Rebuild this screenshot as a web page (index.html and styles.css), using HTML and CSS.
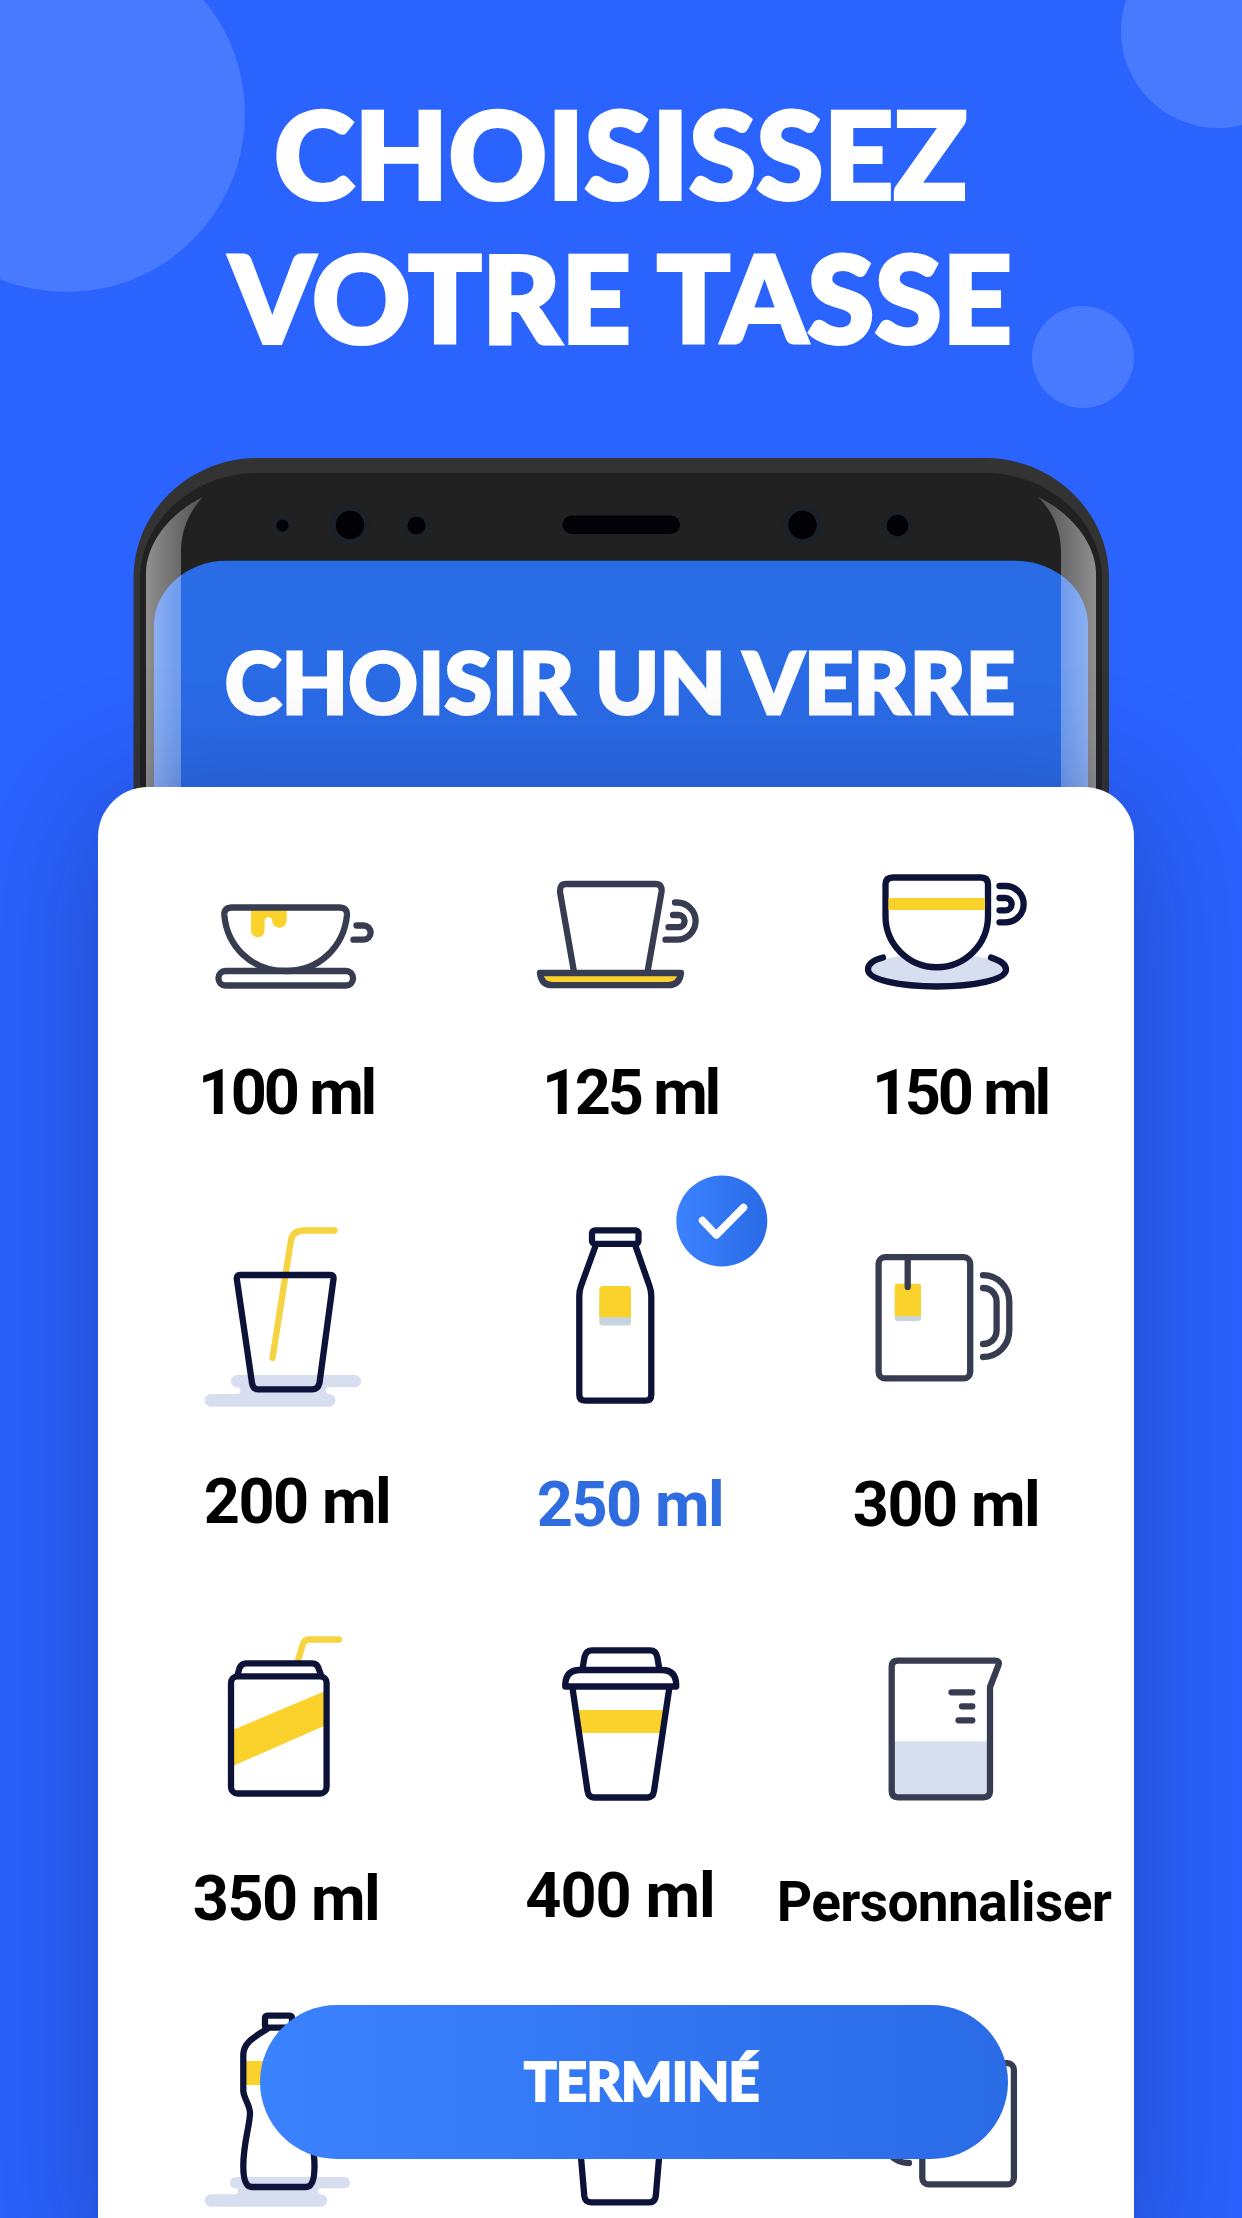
FILE: index.html
```html
<!DOCTYPE html>
<html lang="fr">
<head>
    <meta charset="UTF-8">
    <meta name="viewport" content="width=device-width, initial-scale=1.0">
    <title>Choisissez votre tasse</title>
    <link rel="stylesheet" href="styles.css">
</head>
<body>
    <div class="poster">
        <span class="bubble bubble-left"></span>
        <span class="bubble bubble-top"></span>
        <span class="bubble bubble-small"></span>

        <header>
            <h1>CHOISISSEZ<br>VOTRE TASSE</h1>
        </header>

        <!-- Phone -->
        <section class="phone">
            <svg class="phone-frame" viewBox="133 458 977 360">
                <defs>
                    <linearGradient id="glareLeft">
                        <stop offset="0" stop-color="#fff" stop-opacity="0.5"/>
                        <stop offset="0.4" stop-color="#fff" stop-opacity="0.38"/>
                        <stop offset="1" stop-color="#fff" stop-opacity="0.22"/>
                    </linearGradient>
                    <linearGradient id="glareRight">
                        <stop offset="0" stop-color="#fff" stop-opacity="0.22"/>
                        <stop offset="0.6" stop-color="#fff" stop-opacity="0.38"/>
                        <stop offset="1" stop-color="#fff" stop-opacity="0.5"/>
                    </linearGradient>
                </defs>
                <path fill="#333" d="M133.5 818V578C133.5 511 190 458 257 458H986C1052 458 1109 511 1109 578V818Z"/>
                <path fill="#212121" d="M140 818V578C141 518 196 473 257 473H986C1046 473 1101 518 1102 578V818Z"/>
                <g fill="#1a2129">
                    <circle cx="282.5" cy="525.5" r="9"/>
                    <circle cx="350" cy="525" r="20"/>
                    <circle cx="416.5" cy="525.5" r="12"/>
                    <circle cx="802.5" cy="525" r="20"/>
                    <circle cx="897.5" cy="525.5" r="14"/>
                </g>
                <g fill="#020207">
                    <circle cx="282.5" cy="525.5" r="6"/>
                    <circle cx="350" cy="525" r="14.2"/>
                    <circle cx="416.5" cy="525.5" r="9"/>
                    <rect x="562.5" y="515.5" width="117.5" height="18.5" rx="9.25"/>
                    <circle cx="802.5" cy="525" r="14.2"/>
                    <circle cx="897.5" cy="525.5" r="10.7"/>
                </g>
                <path fill="#2a6be6" d="M154 818V625C154 589 188 560.7 226 560.7H1015C1055 560.7 1088 589 1088 625V818Z"/>
                <path fill="url(#glareLeft)" d="M146 818V572C147 541 172 512 203 497C189 512 181 530 181 552V818Z"/>
                <path fill="url(#glareRight)" d="M1096 818V572C1095 541 1069 512 1038 497C1053 512 1061 530 1061 552V818Z"/>
            </svg>
            <h2>CHOISIR UN VERRE</h2>
        </section>

        <!-- Cup list -->
        <main class="card">
            <div class="row row-1">
                <div class="cup">
                    <svg viewBox="98 827 376 230">
                        <path class="yellow" d="M251 909V930.5a6.800 6.800 0 0 0 13.600 0V921a3.800 3.800 0 0 1 7.600 0a7 7 0 0 0 14.500 -1V909Z"/>
                        <path class="slate" d="M232 907.5H339Q347.500 907.5 347 915C344 946 320 971 286 971C251 971 227 946 224.300 915Q224 907.5 232 907.5Z"/>
                        <rect class="slate" x="218.5" y="971" width="134.5" height="14.5" rx="7"/>
                        <path class="slate" d="M356.5 925.5H363.500a7 7 0 0 1 0 14.200H353.500"/>
                    </svg>
                    <p>100 ml</p>
                </div>
                <div class="cup">
                    <svg viewBox="474 827 312 230">
                        <path class="slate" d="M574 972L560 892Q559.500 884 566 884H655.500Q662.500 884 661.500 892L647.500 972"/>
                        <path class="slate yellow" d="M540 973H681Q679.500 985.200 668 985.200H552Q541.500 985.200 540 973Z"/>
                        <path class="slate" d="M675 902.500H677A18.600 18.600 0 0 1 677 939.700H665.500M673 915H678.500a6.100 6.100 0 0 1 0 12.200H668.500"/>
                    </svg>
                    <p>125 ml</p>
                </div>
                <div class="cup">
                    <svg viewBox="786 827 348 230">
                        <ellipse class="light" cx="937" cy="970" rx="69" ry="16.5"/>
                        <path class="white navy" d="M893 877.500H981Q988 877.500 988 884.500V916A51.200 51.200 0 0 1 885.500 916V884.500Q885.500 877.500 893 877.500Z"/>
                        <path class="yellow" d="M888.500 898H985V910H888.500Z"/>
                        <path class="navy" d="M883 957.500C873 960 868 964 868 969.500C868 980 900 986.500 937 986.500C974 986.500 1006 980 1006 969.500C1006 964 1001 961 991 957.500"/>
                        <path class="navy" d="M999.500 886H1005.500a18.150 18.150 0 0 1 0 36.300H999.500M999.500 898H1005.500a6.150 6.150 0 0 1 0 12.300H999.500"/>
                    </svg>
                    <p>150 ml</p>
                </div>
            </div>

            <div class="row row-2">
                <div class="cup">
                    <svg viewBox="98 1129 376 340">
                        <path class="light" d="M237 1375H355a6 6 0 0 1 0 12.200H329a3.400 3.400 0 0 0 0 6.800a6.300 6.300 0 0 1 0 12.700H211a6.300 6.300 0 0 1 0 -12.700H237a3.400 3.400 0 0 0 0 -6.800a6 6 0 0 1 0 -12.200Z"/>
                        <path class="straw" d="M334.500 1230.500H304Q293 1230.500 291 1240L272.500 1358"/>
                        <path class="navy" d="M240 1275H330.500Q334 1275 333.500 1279L319.500 1383Q318 1389.300 312 1389.300H258Q253 1389.300 252 1383L236.800 1279Q236.500 1275 240 1275Z"/>
                    </svg>
                    <p class="label-200">200 ml</p>
                </div>
                <div class="cup selected">
                    <svg viewBox="474 1129 312 340">
                        <defs>
                            <linearGradient id="badge">
                                <stop offset="0" stop-color="#3b82ff"/>
                                <stop offset="1" stop-color="#2a6be6"/>
                            </linearGradient>
                        </defs>
                        <rect class="tag-shadow" x="599.3" y="1300" width="31.7" height="25.6" rx="3.5"/>
                        <path class="yellow" d="M603 1286H627.500Q631 1286 631 1289.500V1317.300H599.300V1289.500Q599.300 1286 603 1286Z"/>
                        <rect class="navy" x="592" y="1230.3" width="46.5" height="13.6" rx="3"/>
                        <path class="navy" d="M595.500 1246L581 1286Q579.300 1291 579.300 1296V1395Q579.300 1400.700 586 1400.700H645Q651.300 1400.700 651.300 1395V1296Q651.300 1291 649.500 1286L635.500 1246"/>
                        <circle cx="721.8" cy="1221" r="45.5" fill="url(#badge)"/>
                        <path class="check" d="M702.500 1220.500L716.300 1235L743.500 1207.500"/>
                    </svg>
                    <p>250 ml</p>
                </div>
                <div class="cup">
                    <svg viewBox="786 1129 348 340">
                        <rect class="tag-shadow" x="894.7" y="1300" width="26.3" height="21" rx="3"/>
                        <rect class="yellow" x="894.7" y="1283.7" width="26.3" height="32.5" rx="2"/>
                        <rect class="slate" x="878.6" y="1257.2" width="91.6" height="121.2" rx="6.5"/>
                        <path class="slate" d="M907.700 1258V1287"/>
                        <path class="slate" d="M983 1275.200C998 1275.200 1009.300 1287 1009.300 1302V1330C1009.300 1345 998 1357 983 1357M983 1288C991 1288 996.600 1294 996.600 1302V1330C996.600 1338 991 1344 983 1344"/>
                    </svg>
                    <p class="label-300">300 ml</p>
                </div>
            </div>

            <div class="row row-3">
                <div class="cup">
                    <svg viewBox="98 1541 376 322">
                        <path class="yellow" d="M234 1729.500L324 1691.500V1726L234 1765.500Z"/>
                        <path class="straw" d="M297.500 1662L303 1644Q304.500 1639.500 309 1639.500H339"/>
                        <rect class="navy" x="231" y="1676.3" width="95.6" height="117.2" rx="6.5"/>
                        <path class="navy" d="M237.500 1675L239.500 1668Q241.500 1663.300 246 1663.300H312.500Q317 1663.300 318.500 1668L321 1675"/>
                    </svg>
                    <p>350 ml</p>
                </div>
                <div class="cup">
                    <svg viewBox="474 1541 312 322">
                        <path class="yellow" d="M577 1710H665L661 1733H580Z"/>
                        <path class="navy" d="M582.500 1669L584.500 1657Q586 1650.300 592 1650.300H650Q656 1650.300 657.300 1657L659.300 1669"/>
                        <path class="navy" d="M565.300 1686.500V1684Q566 1670 580 1670H662Q675.500 1670 676.200 1684V1686.500Z"/>
                        <path class="navy" d="M572.500 1688L587.500 1791Q588.500 1797.500 594 1797.500H647.500Q653 1797.500 654 1791L669.300 1688"/>
                    </svg>
                    <p class="label-400">400 ml</p>
                </div>
                <div class="cup">
                    <svg viewBox="786 1541 348 322">
                        <path class="light" d="M893 1741.300H989V1796H893Z"/>
                        <path class="slate" d="M898 1660.700H995Q1000 1660.700 998.500 1665L990 1687V1791Q990 1797.300 983.500 1797.300H898Q891.700 1797.300 891.700 1791V1667Q891.700 1660.700 898 1660.700Z"/>
                        <path class="slate" d="M951.500 1692.300H972.300M962 1706.300H972.300M958.500 1720.300H972.300"/>
                    </svg>
                    <p class="label-custom">Personnaliser</p>
                </div>
            </div>

            <div class="row row-4">
                <div class="cup">
                    <svg viewBox="98 1935 376 283">
                        <path class="light" d="M235 2177H345a5.700 5.700 0 0 1 0 11.300H321a3 3 0 0 0 0 6a6.200 6.200 0 0 1 0 12.400H211a6.200 6.200 0 0 1 0 -12.400H235a3 3 0 0 0 0 -6a5.700 5.700 0 0 1 0 -11.300Z"/>
                        <path class="yellow" d="M246 2061H312V2085H246Z"/>
                        <rect class="navy" x="265" y="2015.7" width="27" height="12" rx="2"/>
                        <path class="navy" d="M267 2029C256 2036 243.300 2042 243.300 2055V2091C244 2099 250 2105 250 2113C250 2125 243.300 2143 243.300 2166Q243.300 2187 252 2187H306Q314.500 2187 314.500 2166C314.500 2143 308 2125 308 2113C308 2105 314.500 2099 314.500 2091V2055C314.500 2042 302 2036 291 2029"/>
                    </svg>
                </div>
                <div class="cup">
                    <svg viewBox="474 1935 312 283">
                        <path class="navy" d="M571 2040L584.300 2196Q585 2202.300 591 2202.300H649.500Q655 2202.300 655.800 2196L669 2040Z"/>
                    </svg>
                </div>
                <div class="cup">
                    <svg viewBox="786 1935 348 283">
                        <rect class="slate" x="922.3" y="2063.2" width="91.6" height="121.2" rx="6.5"/>
                        <path class="slate" d="M909 2081C894 2081 882.700 2093 882.700 2108V2136C882.700 2151 894 2163 909 2163"/>
                    </svg>
                </div>
            </div>
        </main>

        <button class="done" type="button">TERMINÉ</button>
    </div>
</body>
</html>
```

FILE: styles.css
```css
* {
    box-sizing: border-box;
}
body {
    margin: 0;
    background-color: #2b63ff;
    font-family: Lato, "Open Sans", sans-serif;
}
.poster {
    position: relative;
    width: 1242px;
    height: 2218px;
    overflow: hidden;
    background-color: #2b63ff;
}
h1, h2, p {
    margin: 0;
}
/* Background bubbles */
.bubble {
    position: absolute;
    border-radius: 50%;
    background-color: #487aff;
}
.bubble-left {
    left: -112px;
    top: -64px;
    width: 357px;
    height: 356px;
}
.bubble-top {
    left: 1121px;
    top: -66px;
    width: 194px;
    height: 194px;
}
.bubble-small {
    left: 1032px;
    top: 306px;
    width: 102px;
    height: 102px;
}
header {
    position: relative;
    height: 458px;
    padding-top: 81px;
    text-align: center;
}
h1 {
    color: white;
    font-size: 121px;
    font-weight: 900;
    line-height: 144px;
    letter-spacing: 0.6px;
    -webkit-text-stroke: 4px white;
}
/* Phone */
.phone {
    position: relative;
    width: 977px;
    height: 329px;
    margin-left: 133px;
    padding-top: 169px;
}
.phone-frame {
    position: absolute;
    left: 0;
    top: 0;
    width: 977px;
    height: 360px;
}
h2 {
    position: relative;
    padding-right: 3px;
    color: white;
    font-size: 86px;
    font-weight: 900;
    line-height: 108px;
    letter-spacing: 0.2px;
    text-align: center;
    white-space: nowrap;
    -webkit-text-stroke: 3px white;
}
/* Cup list */
.card {
    position: relative;
    width: 1036px;
    height: 1480px;
    margin-left: 98px;
    padding-top: 40px;
    border-radius: 50px;
    background-color: white;
    box-shadow: 0 20px 130px rgba(20, 30, 90, 0.4);
}
.row {
    display: grid;
    grid-template-columns: 376px 312px 348px;
}
.cup {
    display: flex;
    flex-direction: column;
    align-items: center;
}
.cup svg {
    display: block;
    width: 100%;
    overflow: visible;
}
.row-1 svg {
    height: 230px;
}
.row-2 svg {
    height: 340px;
}
.row-3 svg {
    height: 322px;
}
.row-4 svg {
    height: 283px;
}
.cup p {
    height: 72px;
    color: black;
    font-family: Roboto, sans-serif;
    font-size: 63px;
    font-weight: 700;
    line-height: 72px;
    letter-spacing: -1.5px;
    white-space: nowrap;
}
.row-1 p {
    letter-spacing: -3.2px;
}
.selected p {
    color: #2f6cdf;
}
.cup .label-200 {
    margin-top: -3px;
    margin-left: 22px;
}
.cup .label-300 {
    margin-left: -28px;
}
.cup .label-400 {
    margin-top: -3px;
    margin-left: -20px;
    letter-spacing: -1px;
}
.cup .label-custom {
    margin-top: 3px;
    margin-bottom: -3px;
    margin-left: -32px;
    font-size: 55px;
    letter-spacing: -0.6px;
}
/* Drawing styles */
.white {
    fill: white;
}
.yellow {
    fill: #fbd22b;
}
.light {
    fill: #d6def0;
}
.tag-shadow {
    fill: #c8d3e2;
}
.slate, .navy, .straw, .check {
    stroke-width: 6.3;
    stroke-linecap: round;
    stroke-linejoin: round;
}
.slate {
    stroke: #383c50;
}
.navy {
    stroke: #0d1338;
}
.slate:not(.yellow), .navy:not(.white), .straw, .check {
    fill: none;
}
.straw {
    stroke: #f6d340;
}
.check {
    stroke: white;
    stroke-width: 7.5;
}
.done {
    position: absolute;
    left: 260px;
    top: 2005px;
    width: 748px;
    height: 154px;
    padding: 0 0 3px 15px;
    border: none;
    border-radius: 77px;
    background: linear-gradient(90deg, #3b82ff, #2a6be6);
    color: white;
    font-family: Lato, "Open Sans", sans-serif;
    font-size: 54px;
    font-weight: 900;
    letter-spacing: -0.6px;
    -webkit-text-stroke: 2px white;
    cursor: pointer;
}
```
